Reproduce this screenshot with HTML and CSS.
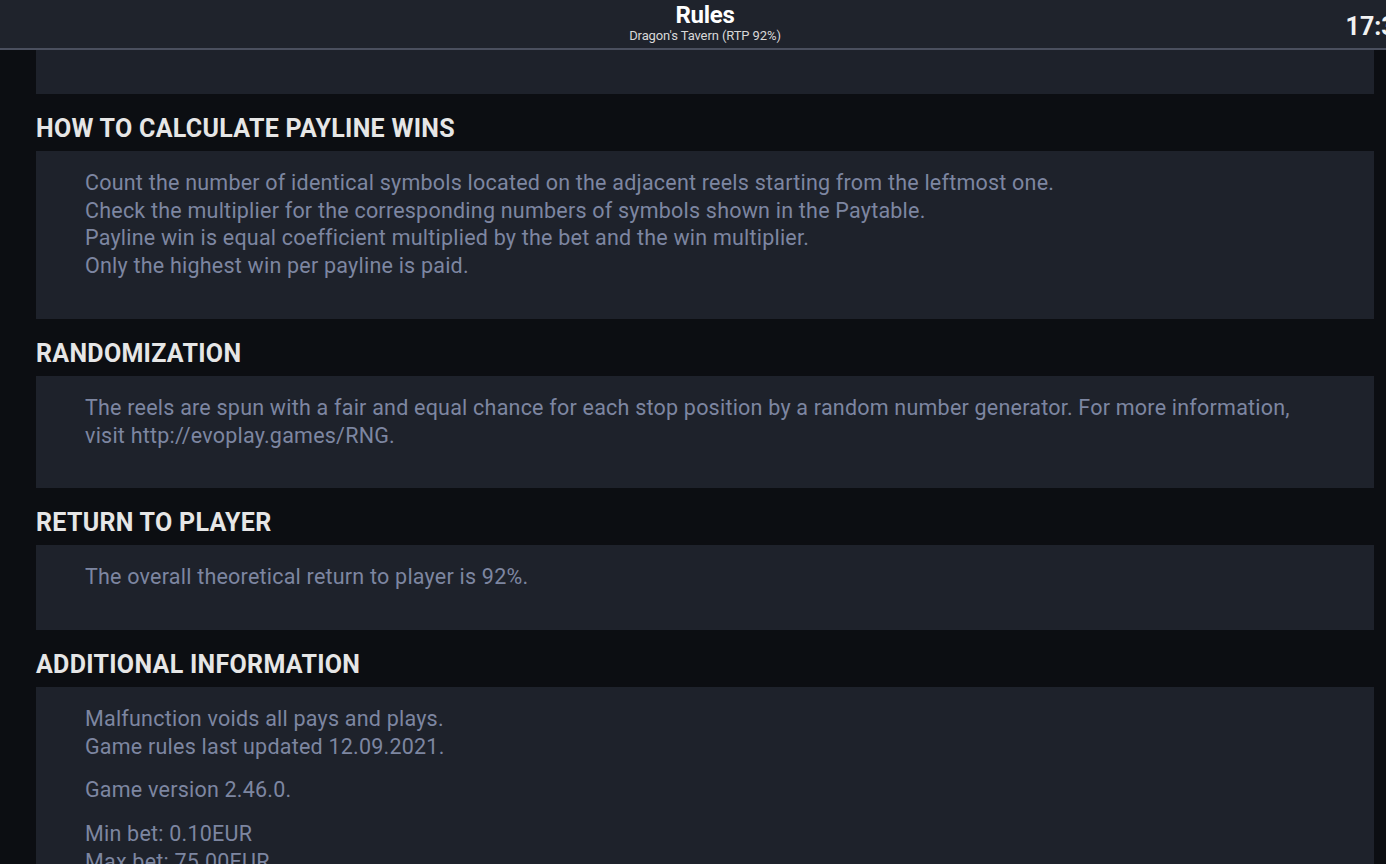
FILE: index.html
```html
<!DOCTYPE html>
<html lang="en">
<head>
  <meta charset="UTF-8">
  <title>Rules</title>
  <link rel="stylesheet" href="styles.css">
</head>
<body>
  <div class="page">
    <header class="topbar">
      <div class="topbar-side"></div>
      <div class="topbar-title">
        <h1>Rules</h1>
        <div class="subtitle">Dragon's Tavern (RTP 92%)</div>
      </div>
      <div class="topbar-side clock">17:30</div>
    </header>

    <main class="rules">
      <!-- tail of the previous section -->
      <div class="panel panel-cut"></div>

      <h2>How to calculate payline wins</h2>
      <div class="panel">
        <p>
          Count the number of identical symbols located on the adjacent reels starting from the leftmost one.<br>
          Check the multiplier for the corresponding numbers of symbols shown in the Paytable.<br>
          Payline win is equal coefficient multiplied by the bet and the win multiplier.<br>
          Only the highest win per payline is paid.
        </p>
      </div>

      <h2>Randomization</h2>
      <div class="panel">
        <p>The reels are spun with a fair and equal chance for each stop position by a random number generator. For more information, visit http://evoplay.games/RNG.</p>
      </div>

      <h2>Return to player</h2>
      <div class="panel">
        <p>The overall theoretical return to player is 92%.</p>
      </div>

      <h2>Additional information</h2>
      <div class="panel">
        <p>Malfunction voids all pays and plays.<br>Game rules last updated 12.09.2021.</p>
        <p>Game version 2.46.0.</p>
        <p>Min bet: 0.10EUR<br>Max bet: 75.00EUR</p>
      </div>
    </main>
  </div>
</body>
</html>
```

FILE: styles.css
```css
html, body {
  margin: 0;
  padding: 0;
  overflow: hidden;
  background: #0c0e12;
  font-family: Roboto, 'Liberation Sans', sans-serif;
}
.page {
  width: 1410px;
  height: 864px;
  overflow: hidden;
}
.topbar {
  display: grid;
  grid-template-columns: 1fr auto 1fr;
  align-items: center;
  height: 48px;
  background: #1f232c;
  border-bottom: 2px solid #4a4f5e;
  color: #fff;
}
.topbar-title {
  text-align: center;
  margin-top: -4px;
}
.topbar-title h1 {
  margin: 0;
  font-size: 24px;
  line-height: 26px;
  font-weight: 700;
  letter-spacing: -0.3px;
}
.subtitle {
  font-size: 13px;
  line-height: 15px;
  color: #d8d8d8;
  letter-spacing: -0.1px;
}
.clock {
  justify-self: end;
  margin-top: 4px;
  font-size: 25px;
  font-weight: 700;
  color: #f2f2f2;
}
.rules {
  padding: 0 36px;
}
.panel {
  background: #1e222b;
  padding: 18px 49px 39px;
}
.panel-cut {
  height: 44px;
  padding: 0;
}
.rules h2 {
  margin: 22px 0 9px;
  font-size: 25px;
  line-height: 26px;
  font-weight: 700;
  text-transform: uppercase;
  color: #e6e6e6;
  letter-spacing: 0.3px;
}
.panel p {
  margin: 0 0 16px;
  font-size: 21.5px;
  line-height: 27.7px;
  color: #7d86a1;
  letter-spacing: 0.22px;
}
.panel p:last-child {
  margin-bottom: 0;
}
```
